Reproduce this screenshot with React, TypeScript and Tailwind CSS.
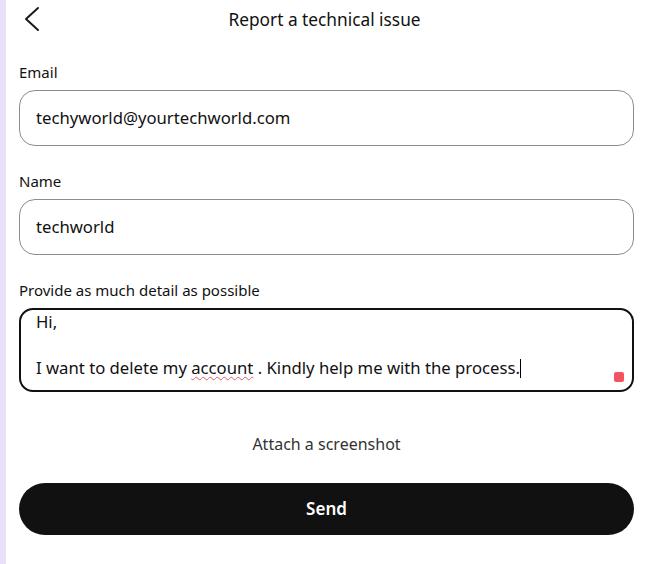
function Field({ label, value }: { label: string; value: string }) {
  return (
    <div className="flex flex-col">
      <label className="text-[15px] leading-[20px] text-[#111]">{label}</label>
      <div className="mt-[8px] h-[56px] rounded-[16px] border border-[#8c8c8c] flex items-center pl-[16px] text-[16.7px] text-[#111]">
        {value}
      </div>
    </div>
  )
}

export default function App() {
  return (
    <div className="w-[650px] h-[564px] flex bg-white" style={{ fontFamily: '"Noto Sans", "Open Sans", sans-serif' }}>
      <div className="w-[6px] bg-[#e9e1fb]" />
      <div className="flex-1 pl-[13px] pr-[16px] flex flex-col">
        <div className="h-[40px] grid grid-cols-[1fr_auto_1fr] items-center">
          <svg className="ml-[5px] mt-[-2px]" width="16" height="26" viewBox="0 0 16 26" fill="none">
            <polyline points="14,2 2,13 14,24" stroke="#1a1a1a" strokeWidth="2" strokeLinecap="round" strokeLinejoin="round" />
          </svg>
          <h1 className="text-[17.3px] text-[#111] -ml-[4px]">Report a technical issue</h1>
          <div />
        </div>

        <div className="mt-[22px] flex flex-col gap-[25px]">
          <Field label="Email" value="techyworld@yourtechworld.com" />
          <Field label="Name" value="techworld" />
          <div className="flex flex-col">
            <label className="text-[15px] leading-[20px] text-[#111]">Provide as much detail as possible</label>
            <div className="relative mt-[8px] h-[84px] rounded-[14px] border-2 border-[#111] pl-[15px] pt-0 text-[16.7px] leading-[23px] text-[#111]">
              <div>Hi,</div>
              <div>&nbsp;</div>
              <div>
                I want to delete my{" "}
                <span className="underline decoration-wavy decoration-[#e05a6a] decoration-1 underline-offset-2">account</span>{" "}
                . Kindly help me with the process.
                <span className="inline-block w-[1px] h-[19px] bg-black align-[-4px]" />
              </div>
              <div className="absolute right-[8px] bottom-[8px] w-[10px] h-[10px] rounded-[2px] bg-[#f25560]" />
            </div>
          </div>
        </div>

        <div className="mt-[40px] text-center text-[16px] text-[#333]">Attach a screenshot</div>

        <button className="mt-[27px] h-[52px] rounded-full bg-[#111111] text-white text-[17px] font-semibold">
          Send
        </button>
      </div>
    </div>
  )
}
